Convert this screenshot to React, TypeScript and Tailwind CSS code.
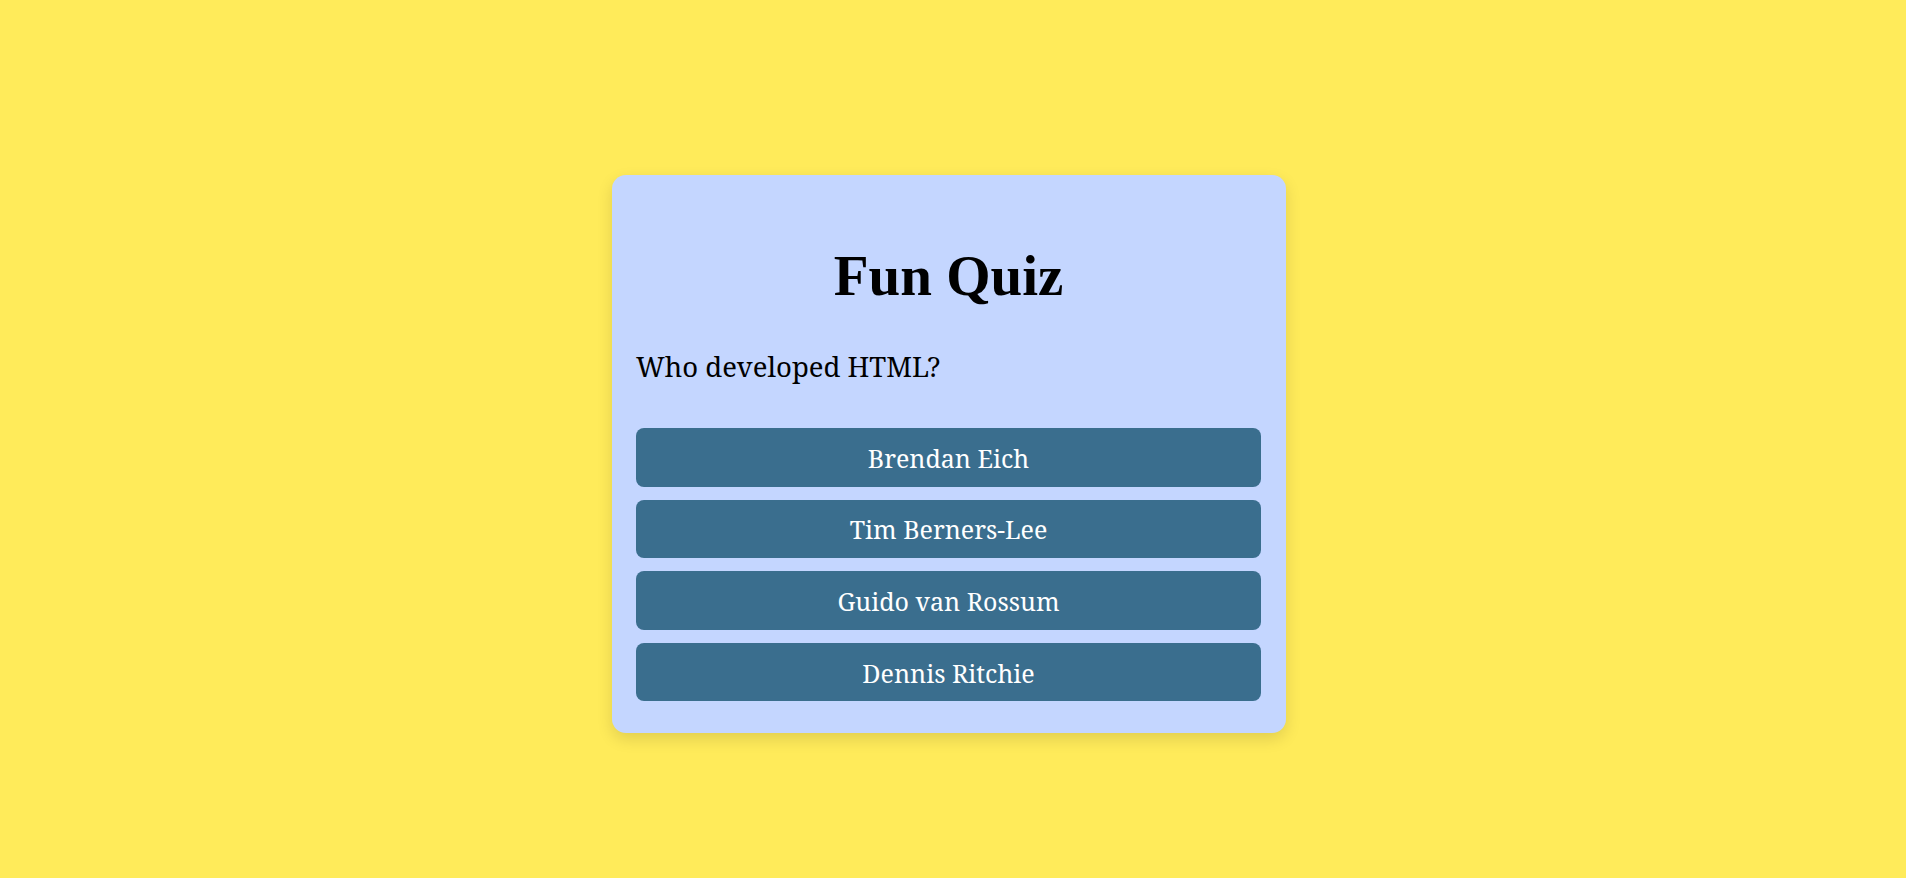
import React from "react"

const answers = ["Brendan Eich", "Tim Berners-Lee", "Guido van Rossum", "Dennis Ritchie"]

const App: React.FC = () => {
  return (
    <div className="flex min-h-screen justify-center bg-[#ffeb5a] pt-[174.5px] pr-[9px]">
      <div className="flex h-[558px] w-[674px] flex-col rounded-[14px] bg-[#c4d6ff] px-[24.5px] pt-[72px] shadow-[0_6px_16px_rgba(0,0,0,0.12)]">
        <h1 className="text-center font-['Liberation_Serif',serif] text-[57px] leading-none font-bold text-black">
          Fun Quiz
        </h1>
        <p className="mt-[49px] font-['Noto_Serif','DejaVu_Serif',serif] text-[27.5px] leading-none text-black">
          Who developed HTML?
        </p>
        <div className="mt-[48px] flex flex-col gap-[13px]">
          {answers.map((a) => (
            <button
              key={a}
              className="flex h-[58.6px] w-full items-center justify-center rounded-[8px] bg-[#3a6e8e] pt-[2px] font-['Noto_Serif','DejaVu_Serif',serif] text-[25px] leading-none text-white"
            >
              {a}
            </button>
          ))}
        </div>
      </div>
    </div>
  )
}

export default App
